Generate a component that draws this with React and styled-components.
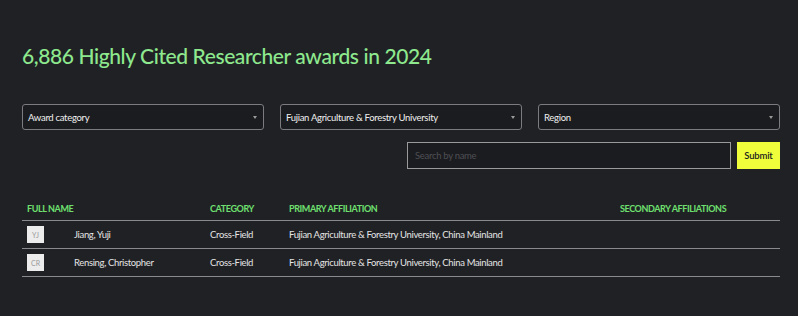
import React from "react";
import styled, { createGlobalStyle } from "styled-components";

const Global = createGlobalStyle`
  html, body { margin: 0; padding: 0; background: #202125; }
  body { font-family: Lato, "Noto Sans", sans-serif; color: #e6e6e6; }
`;

const Page = styled.div`
  padding: 40px 18px 20px 22px;
  display: flex;
  flex-direction: column;
`;

const Title = styled.h1`
  margin: 0;
  font-size: 21px;
  line-height: 32px;
  font-weight: 500;
  color: #8ee98e;
  letter-spacing: -0.4px;
`;

const Filters = styled.div`
  display: grid;
  grid-template-columns: repeat(3, 1fr);
  gap: 16px;
  margin-top: 32px;
`;

const Select = styled.div`
  height: 26px;
  box-sizing: border-box;
  border: 1px solid #7c7c80;
  border-radius: 3px;
  background: #1b1c1f;
  display: flex;
  align-items: center;
  justify-content: space-between;
  padding: 0 6px 0 5px;
  font-size: 9.5px;
  letter-spacing: -0.3px;
  color: #f0f0f0;
`;

const Arrow = styled.span`
  width: 0;
  height: 0;
  border-left: 2px solid transparent;
  border-right: 2px solid transparent;
  border-top: 3px solid #9a9a9a;
`;

const SearchRow = styled.div`
  display: flex;
  justify-content: flex-end;
  gap: 6px;
  margin-top: 12px;
`;

const SearchBox = styled.div`
  width: 324px;
  height: 27px;
  box-sizing: border-box;
  border: 1px solid #9a9a9a;
  background: #1b1c1f;
  display: flex;
  align-items: center;
  padding: 0 7px;
  font-size: 9.5px;
  letter-spacing: -0.3px;
  color: #4e4f55;
`;

const Submit = styled.button`
  width: 43px;
  height: 27px;
  border: none;
  background: #f0fd3a;
  color: #1b1c1f;
  font-family: inherit;
  font-size: 9.5px;
  letter-spacing: -0.2px;
  font-weight: 600;
  padding: 0;
`;

const Table = styled.div`
  margin-top: 34px;
  display: grid;
  grid-template-columns: 188px 79px 331px 1fr;
`;

const Head = styled.div`
  font-size: 9px;
  font-weight: 700;
  text-transform: uppercase;
  color: #6fe06f;
  padding: 0 0 6px ${(p) => p.$pad || 0}px;
  border-bottom: 1px solid #8a8a8e;
  letter-spacing: -0.4px;
`;

const Cell = styled.div`
  height: 28px;
  box-sizing: border-box;
  border-bottom: 1px solid #8a8a8e;
  display: flex;
  align-items: center;
  font-size: 9.5px;
  letter-spacing: -0.35px;
  color: #e4e4e4;
  padding-left: ${(p) => p.$pad || 0}px;
  gap: 30px;
`;

const Avatar = styled.span`
  width: 17px;
  height: 17px;
  background: #ececec;
  color: #9a9a9a;
  font-size: 7px;
  letter-spacing: 0;
  display: flex;
  align-items: center;
  justify-content: center;
  flex-shrink: 0;
`;

const rows = [
  { ini: "YJ", name: "Jiang, Yuji", cat: "Cross-Field", aff: "Fujian Agriculture & Forestry University, China Mainland" },
  { ini: "CR", name: "Rensing, Christopher", cat: "Cross-Field", aff: "Fujian Agriculture & Forestry University, China Mainland" },
];

export default function App() {
  return (
    <>
      <Global />
      <Page>
        <Title>6,886 Highly Cited Researcher awards in 2024</Title>
        <Filters>
          <Select>Award category<Arrow /></Select>
          <Select>Fujian Agriculture &amp; Forestry University<Arrow /></Select>
          <Select>Region<Arrow /></Select>
        </Filters>
        <SearchRow>
          <SearchBox>Search by name</SearchBox>
          <Submit>Submit</Submit>
        </SearchRow>
        <Table>
          <Head $pad={5}>Full name</Head>
          <Head>Category</Head>
          <Head>Primary affiliation</Head>
          <Head>Secondary affiliations</Head>
          {rows.map((r) => (
            <React.Fragment key={r.ini}>
              <Cell $pad={5}><Avatar>{r.ini}</Avatar>{r.name}</Cell>
              <Cell>{r.cat}</Cell>
              <Cell>{r.aff}</Cell>
              <Cell />
            </React.Fragment>
          ))}
        </Table>
      </Page>
    </>
  );
}
